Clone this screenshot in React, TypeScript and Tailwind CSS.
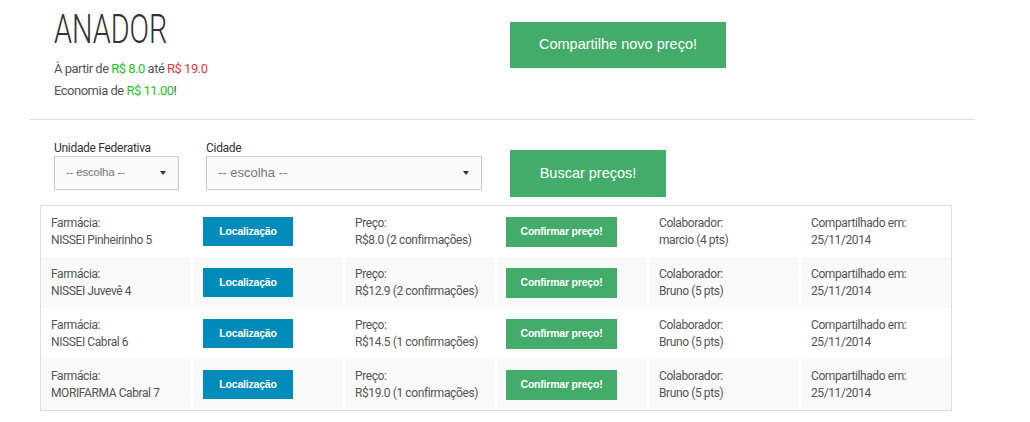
const dosis = { fontFamily: 'Roboto, "Liberation Sans", sans-serif' };

const rows = [
  { farmacia: 'NISSEI Pinheirinho 5', preco: 'R$8.0 (2 confirmações)', colab: 'marcio (4 pts)', data: '25/11/2014' },
  { farmacia: 'NISSEI Juvevê 4', preco: 'R$12.9 (2 confirmações)', colab: 'Bruno (5 pts)', data: '25/11/2014' },
  { farmacia: 'NISSEI Cabral 6', preco: 'R$14.5 (1 confirmações)', colab: 'Bruno (5 pts)', data: '25/11/2014' },
  { farmacia: 'MORIFARMA Cabral 7', preco: 'R$19.0 (1 confirmações)', colab: 'Bruno (5 pts)', data: '25/11/2014' },
];

function Cell({ label, value }: { label: string; value: string }) {
  return (
    <div className="flex flex-col justify-center whitespace-nowrap px-[10px] text-[12px] leading-[17px] tracking-[-0.4px] text-[#555]">
      <span>{label}</span>
      <span>{value}</span>
    </div>
  );
}

function Select({ width, small }: { width: string; small?: boolean }) {
  return (
    <div
      className={`${width} flex h-[34px] items-center justify-between border border-[#ccc] bg-[#fafafa] pl-[11px] pr-[12px] font-['Liberation_Sans',Arial,sans-serif] text-[#777]`}
    >
      <span className={small ? 'text-[11.5px] tracking-[-0.2px]' : 'text-[13px]'}>-- escolha --</span>
      <span className="h-0 w-0 border-x-[3px] border-t-[4px] border-x-transparent border-t-[#333]" />
    </div>
  );
}

export default function App() {
  return (
    <div className="min-h-[422px] bg-white" style={dosis}>
      <div className="ml-[30px] w-[945px]">
        <div className="flex">
          <div className="w-[480px] pl-[24px] pt-[8px]">
            <h1 className="inline-block origin-left scale-x-[0.72] text-[40px] font-light leading-[44px] text-[#333]">
              ANADOR
            </h1>
            <p className="mt-[6px] text-[13px] leading-[22px] tracking-[-0.5px] text-[#555]">
              À partir de <span className="text-[#22c322]">R$ 8.0</span> até{' '}
              <span className="text-[#e23b3b]">R$ 19.0</span>
            </p>
            <p className="text-[13px] leading-[22px] tracking-[-0.5px] text-[#555]">
              Economia de <span className="text-[#22c322]">R$ 11.00</span>!
            </p>
          </div>
          <div className="pt-[22px]">
            <button className="h-[46px] w-[216px] bg-[#43ac6a] font-['Liberation_Sans',Arial,sans-serif] text-[14.5px] text-white">
              Compartilhe novo preço!
            </button>
          </div>
        </div>

        <div className="mt-[17px] h-px bg-[#ddd]" />

        <div className="mt-[20px] flex items-start pl-[24px]">
          <div className="w-[152px]">
            <div className="text-[12px] leading-[16px] tracking-[-0.3px] text-[#333]">Unidade Federativa</div>
            <Select width="w-[125px]" small />
          </div>
          <div className="w-[304px]">
            <div className="text-[12px] leading-[16px] tracking-[-0.3px] text-[#333]">Cidade</div>
            <Select width="w-[276px]" />
          </div>
          <button className="mt-[10px] h-[47px] w-[156px] bg-[#43ac6a] font-['Liberation_Sans',Arial,sans-serif] text-[14.5px] text-white">
            Buscar preços!
          </button>
        </div>

        <div className="ml-[10px] mt-[8px] w-[912px] border border-[#ddd] bg-white">
          {rows.map((r, i) => (
            <div key={i} className="grid h-[51px] grid-cols-6 gap-x-[2px]">
              {[
                <Cell key="f" label="Farmácia:" value={r.farmacia} />,
                <div key="l" className="flex items-center px-[10px]">
                  <button className="h-[29px] w-[90px] bg-[#008cba] font-['Liberation_Sans',Arial,sans-serif] text-[10.5px] font-bold tracking-[-0.2px] text-white">
                    Localização
                  </button>
                </div>,
                <Cell key="p" label="Preço:" value={r.preco} />,
                <div key="c" className="flex items-center px-[9px]">
                  <button className="h-[30px] w-[111px] bg-[#43ac6a] font-['Liberation_Sans',Arial,sans-serif] text-[10.5px] font-bold tracking-[-0.2px] text-white">
                    Confirmar preço!
                  </button>
                </div>,
                <Cell key="co" label="Colaborador:" value={r.colab} />,
                <Cell key="d" label="Compartilhado em:" value={r.data} />,
              ].map((c, j) => (
                <div key={j} className={i % 2 === 1 ? 'flex bg-[#f9f9f9]' : 'flex bg-white'}>
                  {c}
                </div>
              ))}
            </div>
          ))}
        </div>
      </div>
    </div>
  );
}
